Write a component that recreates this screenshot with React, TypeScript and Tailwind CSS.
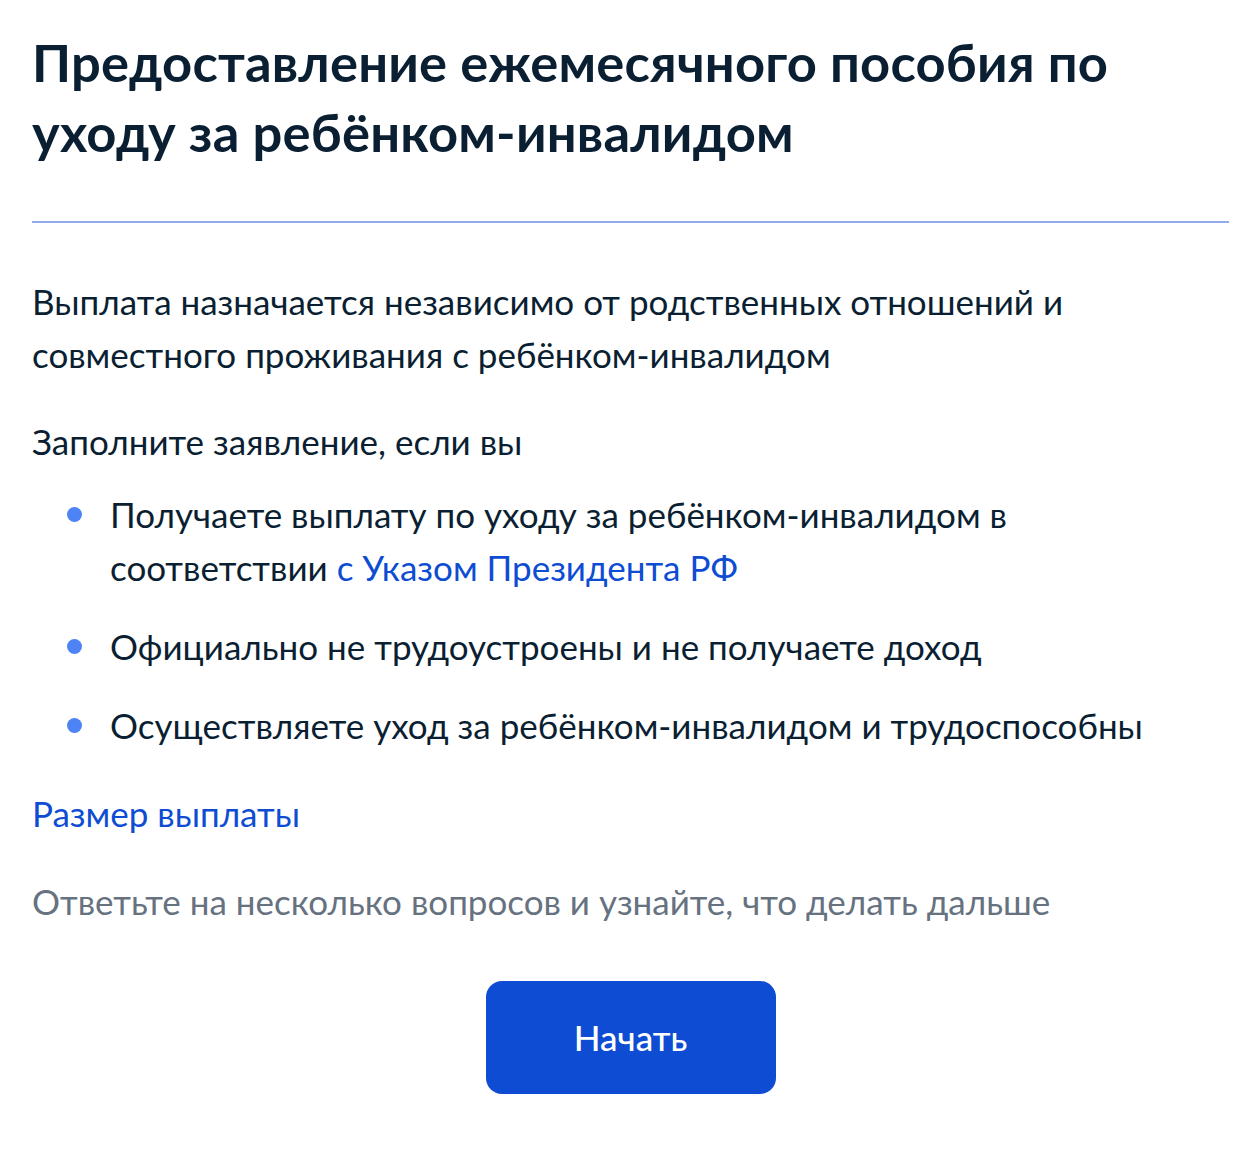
import React from 'react';

const items: React.ReactNode[] = [
  <>
    Получаете выплату по уходу за ребёнком-инвалидом в соответствии{' '}
    <a href="#" className="text-[#0d4cd3]">с Указом Президента РФ</a>
  </>,
  'Официально не трудоустроены и не получаете доход',
  'Осуществляете уход за ребёнком-инвалидом и трудоспособны',
];

const App: React.FC = () => {
  return (
    <div className="min-h-screen bg-white font-['Lato',sans-serif] text-[#0b1f33]">
      <div className="pl-[32px] pr-[31px] pt-[27px]">
        <h1 className="text-[52.5px] leading-[70px] font-bold tracking-[0.2px] pr-[100px]">
          Предоставление ежемесячного пособия по уходу за ребёнком-инвалидом
        </h1>

        <div className="mt-[54px] h-[2px] bg-[#91abec]" />

        <p className="mt-[52px] text-[35px] leading-[53px] pr-[120px]">
          Выплата назначается независимо от родственных отношений и совместного проживания с ребёнком-инвалидом
        </p>

        <p className="mt-[34px] text-[35px] leading-[53px]">Заполните заявление, если вы</p>

        <ul className="mt-[20px] flex flex-col gap-[26px] pl-[35px]">
          {items.map((it, i) => (
            <li key={i} className="flex gap-[28px] text-[35px] leading-[53px]">
              <span className="mt-[19px] h-[15px] w-[15px] shrink-0 rounded-full bg-[#4d83f5]" />
              <span className="pr-[180px] last:pr-0">{it}</span>
            </li>
          ))}
        </ul>

        <a href="#" className="mt-[35px] block text-[35px] leading-[53px] text-[#0d4cd3]">
          Размер выплаты
        </a>

        <p className="mt-[35px] text-[35px] leading-[53px] text-[#66727f]">
          Ответьте на несколько вопросов и узнайте, что делать дальше
        </p>

        <div className="mt-[53px] flex justify-center">
          <button className="h-[113px] w-[290px] rounded-[16px] bg-[#0d4cd3] text-[35px] font-medium text-white">
            Начать
          </button>
        </div>
      </div>
    </div>
  );
};

export default App;
